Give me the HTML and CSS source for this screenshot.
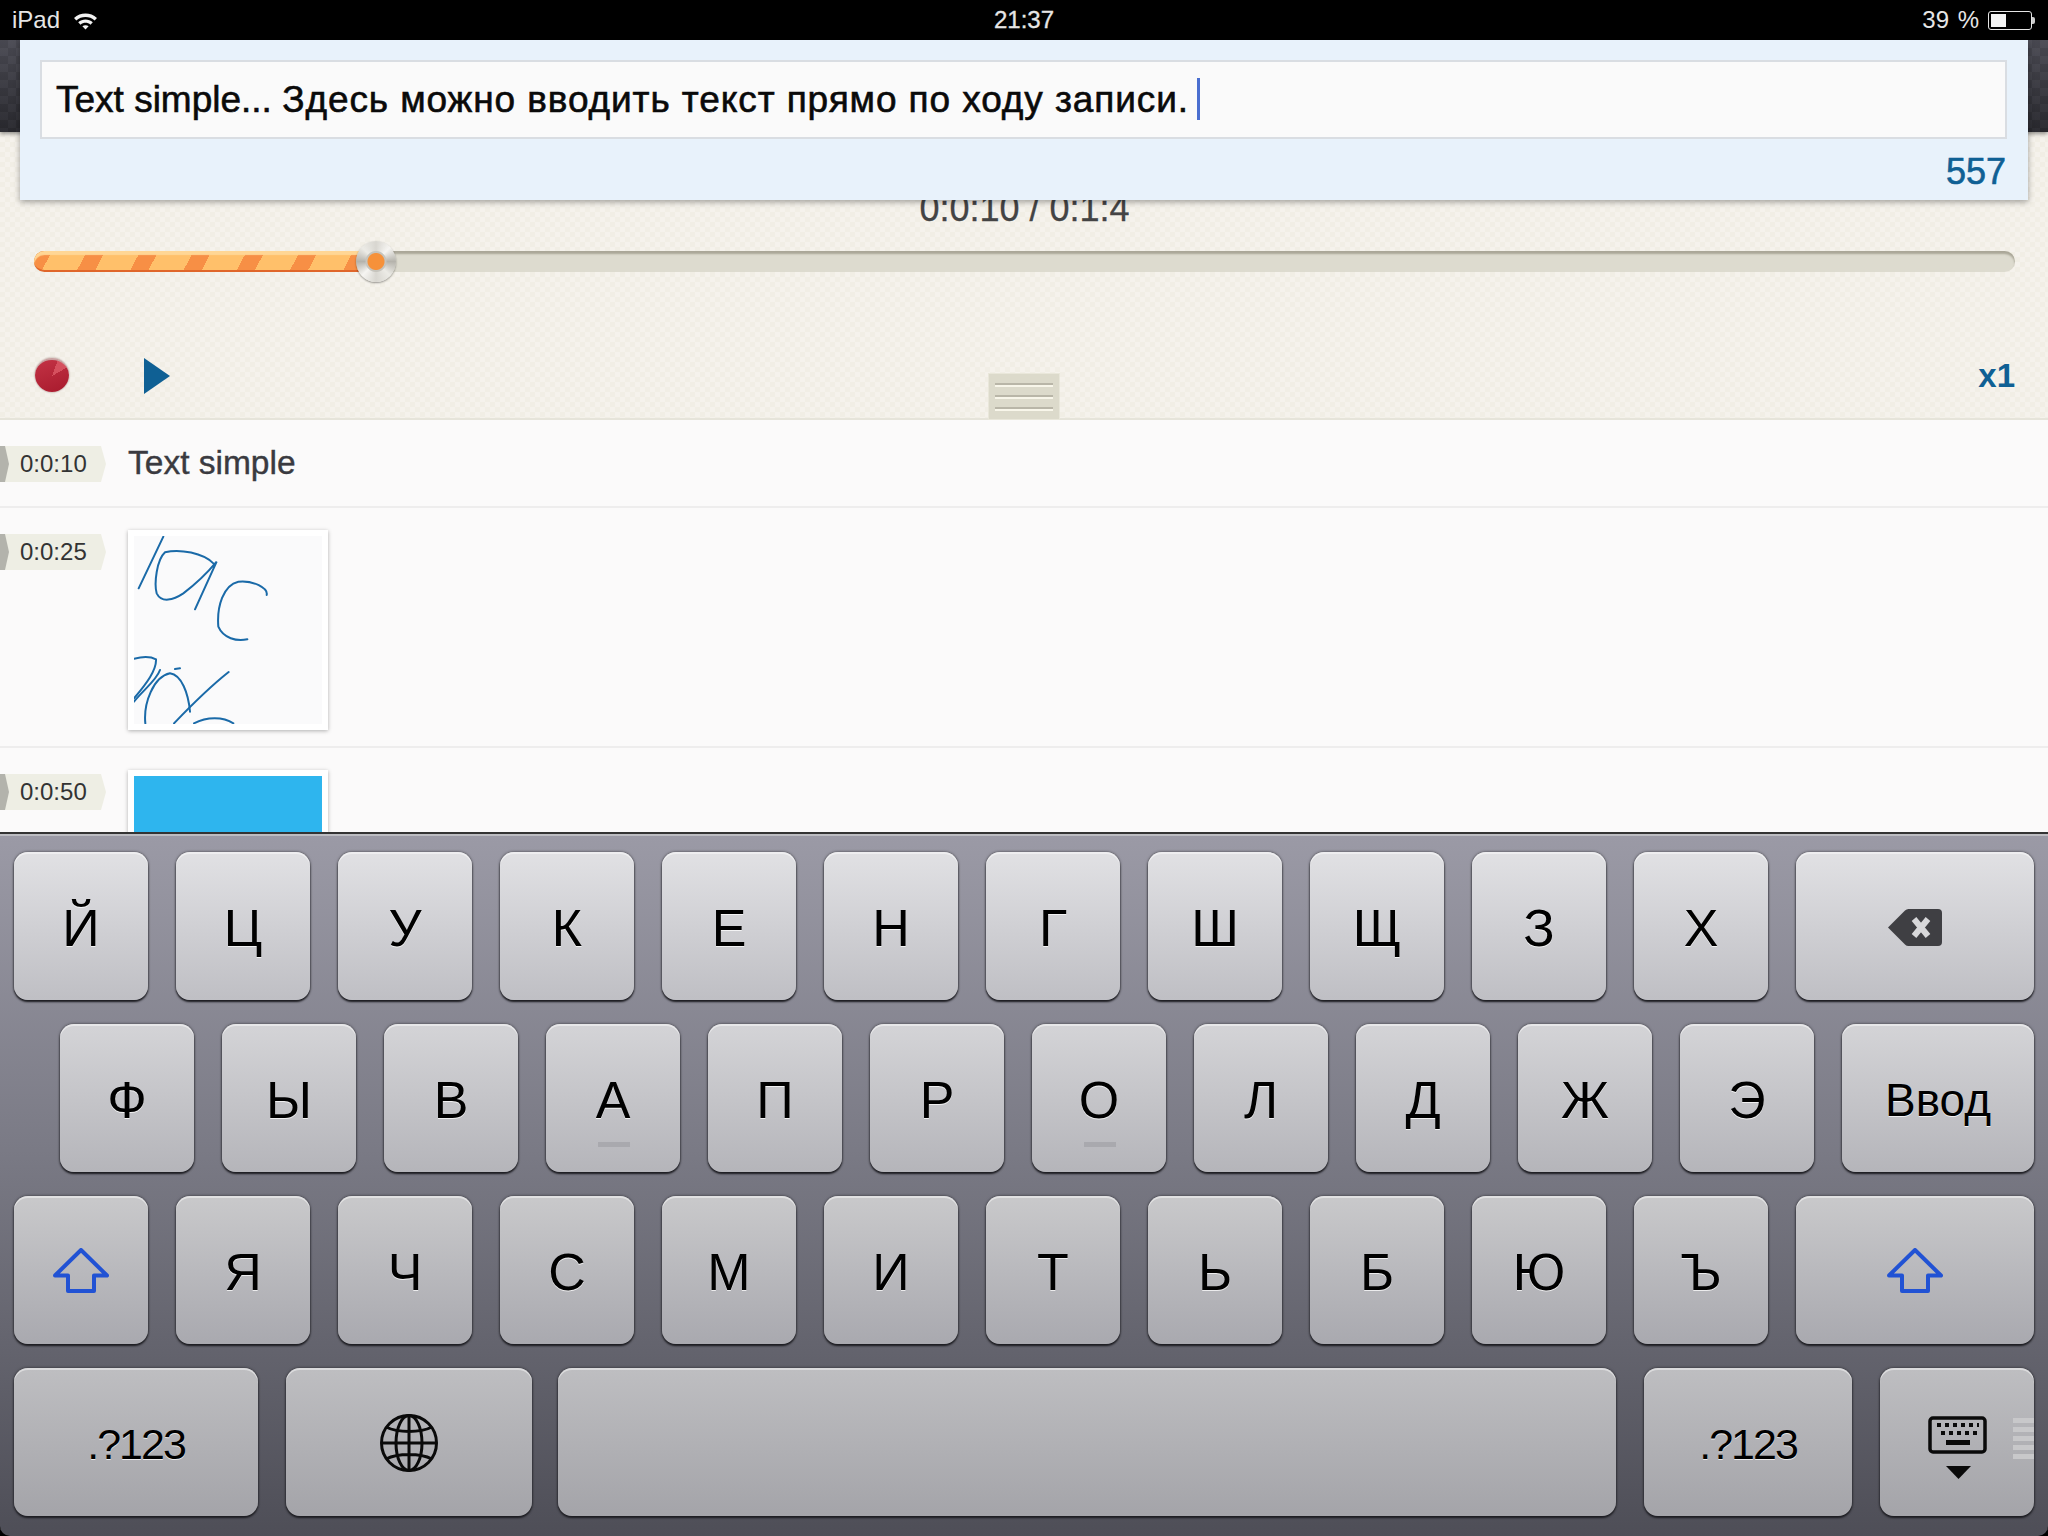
FILE: index.html
```html
<!DOCTYPE html>
<html lang="ru">

<head>
    <meta charset="UTF-8">
    <title>Запись</title>
    <link rel="stylesheet" href="styles.css">
</head>

<body>
    <div class="page">
        <div class="status-bar">
            <div class="status-left">
                <span>iPad</span>
                <svg class="wifi" viewBox="0 0 24 18">
                    <path d="M1 6.500C7 1 17 1 23 6.500L20.800 8.900C16 4.600 8 4.600 3.200 8.900Z" />
                    <path d="M5 10.600C9 7.200 15 7.200 19 10.600L16.800 13C14 10.600 10 10.600 7.200 13Z" />
                    <path d="M9 14.500C10.800 13.100 13.200 13.100 15 14.500L12 17.600Z" />
                </svg>
            </div>
            <div class="status-time">21:37</div>
            <div class="status-right">
                <span>39 %</span>
                <div class="battery">
                    <div class="battery-level"></div>
                </div>
            </div>
        </div>

        <div class="top-bar"></div>

        <div class="player">
            <div class="player-time">0:0:10 / 0:1:4</div>
            <div class="track">
                <div class="track-fill">
                    <div class="track-thumb"></div>
                </div>
            </div>
            <div class="player-buttons">
                <div class="btn-record"></div>
                <div class="btn-play"></div>
                <div class="speed">x1</div>
            </div>
            <div class="handle">
                <span></span>
                <span></span>
                <span></span>
            </div>
        </div>

        <div class="note-panel">
            <div class="note-input">Text simple... <span class="note-ru">Здесь можно вводить текст прямо по ходу записи.</span><span class="caret"></span></div>
            <div class="note-count">557</div>
        </div>

        <div class="entries">
            <div class="entry">
                <div class="stamp">0:0:10</div>
                <div class="entry-text">Text simple</div>
            </div>
            <div class="entry">
                <div class="stamp">0:0:25</div>
                <div class="thumb">
                    <svg class="sketch" viewBox="402 348 564 564">
                        <path d="M490 350L416 505" />
                        <path d="M640 430C610 400 540 385 495 397C470 420 462 490 470 520C485 550 520 540 550 520C590 490 625 455 650 425L585 568" />
                        <path d="M800 525C805 505 760 480 715 485C670 495 650 560 655 620C670 655 710 665 742 658" />
                        <path d="M402 716C425 710 450 708 468 718C470 750 440 790 402 835" />
                        <path d="M402 845C430 810 470 780 480 750" />
                        <path d="M436 910C430 850 460 770 510 760C545 765 565 820 570 875" />
                        <path d="M522 910C570 860 630 800 686 756" />
                        <path d="M582 910C620 890 670 890 700 910" />
                        <path d="M525 747L540 745" />
                    </svg>
                </div>
            </div>
            <div class="entry">
                <div class="stamp">0:0:50</div>
                <div class="thumb thumb-blue"></div>
            </div>
        </div>

        <div class="keyboard">
            <div class="kb-row row-1">
                <div class="key">Й</div>
                <div class="key">Ц</div>
                <div class="key">У</div>
                <div class="key">К</div>
                <div class="key">Е</div>
                <div class="key">Н</div>
                <div class="key">Г</div>
                <div class="key">Ш</div>
                <div class="key">Щ</div>
                <div class="key">З</div>
                <div class="key">Х</div>
                <div class="key key-wide">
                    <svg class="icon-delete" viewBox="0 0 54 37">
                        <path class="delete-body" d="M0 18.500L17 1.500Q18.500 0 20.500 0H50Q54 0 54 4V33Q54 37 50 37H20.500Q18.500 37 17 35.500Z" />
                        <path class="delete-x" d="M26 10L40 27M40 10L26 27" />
                    </svg>
                </div>
            </div>
            <div class="kb-row row-2">
                <div class="key">Ф</div>
                <div class="key">Ы</div>
                <div class="key">В</div>
                <div class="key key-mark">А</div>
                <div class="key">П</div>
                <div class="key">Р</div>
                <div class="key key-mark">О</div>
                <div class="key">Л</div>
                <div class="key">Д</div>
                <div class="key">Ж</div>
                <div class="key">Э</div>
                <div class="key key-enter">Ввод</div>
            </div>
            <div class="kb-row row-3">
                <div class="key">
                    <svg class="icon-shift" viewBox="0 0 56 45">
                        <path d="M28 2L54 27.500H41V43H15V27.500H2Z" />
                    </svg>
                </div>
                <div class="key">Я</div>
                <div class="key">Ч</div>
                <div class="key">С</div>
                <div class="key">М</div>
                <div class="key">И</div>
                <div class="key">Т</div>
                <div class="key">Ь</div>
                <div class="key">Б</div>
                <div class="key">Ю</div>
                <div class="key">Ъ</div>
                <div class="key key-wide">
                    <svg class="icon-shift" viewBox="0 0 56 45">
                        <path d="M28 2L54 27.500H41V43H15V27.500H2Z" />
                    </svg>
                </div>
            </div>
            <div class="kb-row row-4">
                <div class="key key-num">.?123</div>
                <div class="key key-globe">
                    <svg class="icon-globe" viewBox="0 0 58 58">
                        <circle cx="29" cy="29" r="27.500" />
                        <ellipse cx="29" cy="29" rx="13" ry="27.500" />
                        <path d="M29 1.500V56.500M1.500 29H56.500M6 13C18 19 40 19 52 13M6 45C18 39 40 39 52 45" />
                    </svg>
                </div>
                <div class="key key-space"></div>
                <div class="key key-num2">.?123</div>
                <div class="key key-hide">
                    <svg class="icon-keyboard" viewBox="0 0 59 63">
                        <rect x="2" y="2" width="55" height="34" rx="3" class="kbd-frame" />
                        <path class="kbd-keys" d="M9 7h4v4H9zM17 7h4v4h-4zM25 7h4v4h-4zM33 7h4v4h-4zM41 7h4v4h-4zM49 7h2v4h-2zM13 15h4v4h-4zM21 15h4v4h-4zM29 15h4v4h-4zM37 15h4v4h-4zM45 15h4v4h-4zM18 24h24v5H18z" />
                        <path class="kbd-keys" d="M18 50H43L30.500 63Z" />
                    </svg>
                    <div class="grip">
                        <span></span>
                        <span></span>
                        <span></span>
                        <span></span>
                        <span></span>
                    </div>
                </div>
            </div>
        </div>
    </div>
</body>

</html>
```

FILE: styles.css
```css
* {
    box-sizing: border-box;
}

body {
    margin: 0;
    background: #000;
    font-family: 'Liberation Sans', Arial, sans-serif;
    color: #333;
}

.page {
    position: relative;
    width: 2048px;
    height: 1536px;
    overflow: hidden;
    display: flex;
    flex-direction: column;
}

/* status bar */
.status-bar {
    height: 40px;
    flex: none;
    background: #000;
    color: #e6e6e6;
    font-size: 24px;
    line-height: 40px;
    display: grid;
    grid-template-columns: 1fr auto 1fr;
    padding: 0 12px;
}

.status-left {
    display: flex;
    align-items: center;
    gap: 13px;
}

.wifi {
    width: 25px;
    height: 19px;
    fill: #f2f2f2;
}

.status-time {
    -webkit-text-stroke: 0.3px #e6e6e6;
}

.status-right {
    display: flex;
    align-items: center;
    justify-content: flex-end;
    gap: 9px;
    word-spacing: 2px;
}

.battery {
    position: relative;
    width: 44px;
    height: 19px;
    border: 1px solid #e6e6e6;
    border-radius: 3px;
    padding: 2px;
    margin-right: 4px;
}

.battery::after {
    content: "";
    position: absolute;
    right: -4px;
    top: 5px;
    width: 3px;
    height: 7px;
    background: #ccc;
    border-radius: 0 2px 2px 0;
}

.battery-level {
    width: 15px;
    height: 13px;
    background: #f4f4f4;
}

/* dark strip behind the note panel */
.top-bar {
    height: 92px;
    flex: none;
    background-color: #3d3d46;
    background-image:
        linear-gradient(to bottom, rgba(90, 90, 100, 0.5), rgba(30, 30, 34, 0.6)),
        repeating-conic-gradient(#44444c 0% 25%, #35353c 0% 50%);
    background-size: auto, 16px 16px;
    box-shadow: 0 2px 4px rgba(0, 0, 0, 0.4);
    z-index: 1;
}

/* player */
.player {
    position: relative;
    height: 288px;
    flex: none;
    padding: 57px 33px 0 34px;
    background-color: #f1eee5;
    background-image:
        linear-gradient(45deg, rgba(255, 255, 255, 0.25) 25%, transparent 25%, transparent 75%, rgba(255, 255, 255, 0.25) 75%),
        linear-gradient(45deg, rgba(255, 255, 255, 0.25) 25%, transparent 25%, transparent 75%, rgba(255, 255, 255, 0.25) 75%);
    background-size: 10px 10px;
    background-position: 0 0, 5px 5px;
    border-bottom: 2px solid #e6e4da;
}

.player-time {
    height: 40px;
    font-size: 36px;
    line-height: 40px;
    text-align: center;
    color: #444;
    -webkit-text-stroke: 0.3px #444;
}

.track {
    height: 21px;
    margin-top: 22px;
    background: #dddbcf;
    border-radius: 11px;
    box-shadow: inset 0 3px 2px #aaa798;
}

.track-fill {
    position: relative;
    width: 342px;
    height: 21px;
    border-radius: 11px 0 0 11px;
    border-bottom: 2px solid #e0662a;
    background-color: #ffbe66;
    background-image: repeating-linear-gradient(118deg, #f78f45 0 16px, #ffc06a 16px 47px);
    box-shadow: inset 0 4px 1px #ffd695;
}

.track-thumb {
    position: absolute;
    right: -20px;
    top: -10px;
    width: 40px;
    height: 41px;
    border-radius: 50%;
    background:
        radial-gradient(circle, #f6913a 0 8px, #c6c4bd 9px 10px, transparent 11px),
        conic-gradient(#d8d6d0, #f6f5f2, #b5b3ac, #ecebe6, #d8d6d0, #f6f5f2, #b5b3ac, #ecebe6, #d8d6d0);
    box-shadow: 0 1px 2px rgba(0, 0, 0, 0.4);
}

.player-buttons {
    display: flex;
    align-items: center;
    height: 40px;
    margin-top: 84px;
}

.btn-record {
    width: 34px;
    height: 34px;
    margin-top: -2px;
    margin-left: 1px;
    border-radius: 50%;
    border-top: 2px solid #c9a0a0;
    background:
        conic-gradient(from 20deg at 50% 50%, #d5505e 0 40deg, transparent 40deg),
        linear-gradient(160deg, #c33345, #a81a2d);
    box-shadow: 0 0 2px rgba(90, 40, 40, 0.6);
}

.btn-play {
    width: 0;
    height: 0;
    margin-left: 75px;
    border-style: solid;
    border-width: 18px 0 18px 26px;
    border-color: transparent transparent transparent #0f6094;
}

.speed {
    margin-left: auto;
    font-size: 33px;
    font-weight: bold;
    color: #0f6094;
}

.handle {
    position: absolute;
    left: 988px;
    bottom: -2px;
    width: 72px;
    height: 47px;
    padding: 9px 6px 0;
    background: #dcdacb;
    border: 1px solid #e9e7da;
}

.handle span {
    display: block;
    height: 4px;
    margin-bottom: 8px;
    border-top: 2px solid #b9b6a8;
    border-bottom: 2px solid #f8f6ea;
}

/* note panel over the player */
.note-panel {
    position: absolute;
    left: 20px;
    top: 40px;
    width: 2008px;
    height: 160px;
    z-index: 2;
    padding: 20px 21px 0 20px;
    background: #e8f2fb;
    box-shadow: 0 2px 6px rgba(0, 0, 0, 0.35);
}

.note-input {
    height: 79px;
    padding-left: 14px;
    background: #fafafa;
    border: 2px solid #d9dde2;
    font-size: 37px;
    line-height: 76px;
    color: #0a0a0a;
    -webkit-text-stroke: 0.6px #0a0a0a;
    white-space: nowrap;
}

.note-ru {
    letter-spacing: 0.9px;
}

.caret {
    display: inline-block;
    width: 3px;
    height: 42px;
    margin-left: 8px;
    vertical-align: -8px;
    background: #4a6fd0;
}

.note-count {
    margin-top: 12px;
    padding-right: 1px;
    text-align: right;
    font-size: 36px;
    line-height: 42px;
    color: #0f6094;
    -webkit-text-stroke: 0.6px #0f6094;
}

/* list of entries */
.entries {
    flex: 1;
    overflow: hidden;
    background: #fbfafa;
}

.entry {
    display: flex;
    align-items: flex-start;
    gap: 22px;
    padding-top: 22px;
    padding-bottom: 16px;
    border-bottom: 2px solid #eeeded;
}

.stamp {
    position: relative;
    width: 106px;
    height: 36px;
    margin-top: 4px;
    padding-left: 20px;
    font-size: 24px;
    line-height: 36px;
    color: #333;
    background: #eeeee4;
    clip-path: polygon(0 0, 101px 0, 106px 50%, 101px 100%, 0 100%);
}

.stamp::before {
    content: "";
    position: absolute;
    left: 0;
    top: 0;
    width: 9px;
    height: 36px;
    background: #b3b3ac;
    clip-path: polygon(0 0, 5px 0, 9px 50%, 5px 100%, 0 100%);
}

.entry-text {
    height: 42px;
    margin-bottom: 6px;
    font-size: 33.500px;
    line-height: 42px;
    color: #3a3a40;
    -webkit-text-stroke: 0.4px #3a3a40;
}

.thumb {
    width: 200px;
    height: 200px;
    flex: none;
    padding: 6px;
    background: #fff;
    box-shadow: 0 1px 4px rgba(0, 0, 0, 0.3);
}

.sketch {
    display: block;
    width: 188px;
    height: 188px;
    background: #fafafb;
    fill: none;
    stroke: #1a6aa8;
    stroke-width: 6;
    stroke-linecap: round;
}

.thumb-blue::after {
    content: "";
    display: block;
    height: 188px;
    background: #2eb5ee;
}

/* keyboard */
.keyboard {
    height: 704px;
    flex: none;
    display: flex;
    flex-direction: column;
    gap: 24px;
    padding: 18px 14px 0;
    border-top: 2px solid #333;
    margin-top: -2px;
    border-radius: 0 0 10px 10px;
    background: linear-gradient(to bottom, #9b9aa6, #7a7a85 45%, #4e4e57);
    box-shadow: inset 0 2px 0 #bdbdc2;
    position: relative;
    z-index: 3;
}

.kb-row {
    display: flex;
    gap: 28px;
    height: 148px;
}

.row-2 {
    padding-left: 46px;
}

.key {
    position: relative;
    width: 134px;
    height: 148px;
    flex: none;
    display: flex;
    align-items: center;
    justify-content: center;
    padding-top: 4px;
    border-radius: 14px;
    font-size: 52px;
    color: #000;
    text-shadow: 0 1px 0 rgba(255, 255, 255, 0.75);
    box-shadow:
        inset 0 2px 0 rgba(255, 255, 255, 0.45),
        0 2px 2px #1d1d22,
        0 0 3px rgba(0, 0, 0, 0.6);
}

.row-1 .key {
    background: linear-gradient(to bottom, #e1e1e4, #bfbfc4);
}

.row-2 .key {
    background: linear-gradient(to bottom, #d4d4d7, #b5b5ba);
}

.row-3 .key {
    background: linear-gradient(to bottom, #c9c9cb, #a9a9af);
}

.row-4 .key {
    background: linear-gradient(to bottom, #bebec1, #a4a4a9);
}

.key-wide {
    width: 238px;
}

.key-enter {
    width: 192px;
    font-size: 46px;
}

.key-mark::after {
    content: "";
    position: absolute;
    left: 52px;
    top: 118px;
    width: 32px;
    height: 5px;
    background: #a9a9ae;
}

.key-num,
.key-num2 {
    font-size: 43px;
    letter-spacing: -2px;
}

.key-num {
    width: 244px;
}

.key-globe {
    width: 246px;
    padding-top: 2px;
}

.key-space {
    flex: 1;
    margin-left: -2px;
}

.key-num2 {
    width: 208px;
}

.key-hide {
    width: 154px;
    padding-top: 2px;
}

.icon-delete {
    width: 54px;
    height: 37px;
    margin-bottom: 2px;
}

.delete-body {
    fill: #3f3f43;
}

.delete-x {
    fill: none;
    stroke: #d8d8da;
    stroke-width: 6;
}

.icon-shift {
    width: 56px;
    height: 45px;
    margin-bottom: 4px;
    fill: none;
    stroke: #2152d4;
    stroke-width: 4;
    stroke-linejoin: round;
}

.icon-globe {
    width: 58px;
    height: 58px;
    fill: none;
    stroke: #0a0a0a;
    stroke-width: 3;
}

.icon-keyboard {
    width: 59px;
    height: 63px;
    margin-top: 8px;
}

.kbd-frame {
    fill: none;
    stroke: #0a0a0a;
    stroke-width: 3.500;
}

.kbd-keys {
    fill: #0a0a0a;
}

.grip {
    position: absolute;
    right: 0;
    top: 50px;
    width: 21px;
}

.grip span {
    display: block;
    height: 5px;
    margin-bottom: 4px;
    background: #c8c8ca;
}
```
